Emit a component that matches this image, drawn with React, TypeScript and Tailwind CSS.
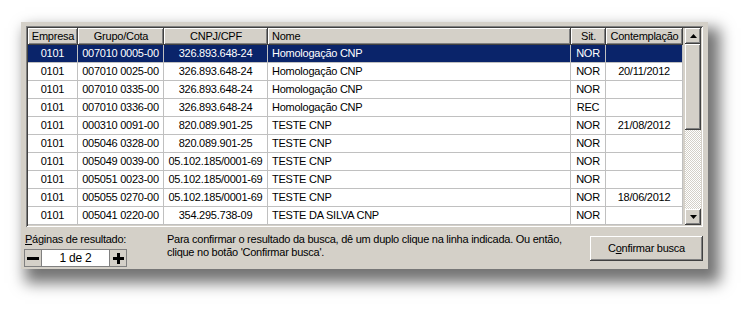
const rows = [
  ["0101", "007010 0005-00", "326.893.648-24", "Homologação CNP", "NOR", ""],
  ["0101", "007010 0025-00", "326.893.648-24", "Homologação CNP", "NOR", "20/11/2012"],
  ["0101", "007010 0335-00", "326.893.648-24", "Homologação CNP", "NOR", ""],
  ["0101", "007010 0336-00", "326.893.648-24", "Homologação CNP", "REC", ""],
  ["0101", "000310 0091-00", "820.089.901-25", "TESTE CNP", "NOR", "21/08/2012"],
  ["0101", "005046 0328-00", "820.089.901-25", "TESTE CNP", "NOR", ""],
  ["0101", "005049 0039-00", "05.102.185/0001-69", "TESTE CNP", "NOR", ""],
  ["0101", "005051 0023-00", "05.102.185/0001-69", "TESTE CNP", "NOR", ""],
  ["0101", "005055 0270-00", "05.102.185/0001-69", "TESTE CNP", "NOR", "18/06/2012"],
  ["0101", "005041 0220-00", "354.295.738-09", "TESTE DA SILVA CNP", "NOR", ""],
];

// column widths + alignment
const cols = [
  { title: "Empresa", w: "w-[50px]", align: "justify-center" },
  { title: "Grupo/Cota", w: "w-[86px]", align: "justify-center" },
  { title: "CNPJ/CPF", w: "w-[104px]", align: "justify-center" },
  { title: "Nome", w: "w-[303px]", align: "justify-start pl-[4px]" },
  { title: "Sit.", w: "w-[35px]", align: "justify-center" },
  { title: "Contemplação", w: "w-[77px]", align: "justify-center" },
];

const raised =
  "shadow-[inset_-1px_-1px_0_#404040,inset_1px_1px_0_#ffffff,inset_-2px_-2px_0_#808080]";

function Arrow({ down }: { down?: boolean }) {
  return (
    <svg width="7" height="4" viewBox="0 0 7 4">
      <path d={down ? "M0 0h7L3.5 4z" : "M3.5 0L7 4H0z"} fill="#000" />
    </svg>
  );
}

export default function App() {
  return (
    <div
      className="w-[751px] h-[312px] bg-white pl-[21px] pt-[22px] text-[11px] tracking-[-0.25px] text-black"
      style={{ fontFamily: '"Liberation Sans", Arial, sans-serif' }}
    >
      <div className="w-[687px] h-[247px] bg-[#d4d0c8] flex flex-col shadow-[8px_10px_14px_4px_rgba(0,0,0,0.55)]">
        {/* grid */}
        <div className="ml-[5px] mt-[4px] w-[677px] h-[201px] p-[2px] flex bg-[#d4d0c8] shadow-[inset_1px_1px_0_#808080,inset_-1px_-1px_0_#ffffff,inset_2px_2px_0_#404040,inset_-2px_-2px_0_#d4d0c8]">
          <div className="w-[657px] flex flex-col">
            <div className="flex h-[17px]">
              {cols.map((c) => (
                <div
                  key={c.title}
                  className={`${c.w} ${c.align} flex items-center h-[17px] ${
                    c.title === "Nome" ? "pl-[2px]" : ""
                  } ${raised}`}
                >
                  {c.title}
                </div>
              ))}
            </div>
            {rows.map((r, i) => (
              <div
                key={i}
                className={`flex h-[18px] ${i === 0 ? "bg-[#0a246a] text-white" : "bg-white"}`}
              >
                {r.map((v, j) => (
                  <div
                    key={j}
                    className={`${cols[j].w} ${cols[j].align} flex items-center border-r border-b border-[#c0c0c0] whitespace-nowrap overflow-hidden`}
                  >
                    {v}
                  </div>
                ))}
              </div>
            ))}
          </div>

          {/* scrollbar */}
          <div className="ml-[2px] w-[16px] flex flex-col">
            <div className={`h-[16px] bg-[#d4d0c8] flex items-center justify-center ${raised}`}>
              <Arrow />
            </div>
            <div className={`h-[86px] bg-[#d4d0c8] ${raised}`} />
            <div className="flex-1 bg-[image:repeating-conic-gradient(#d4d0c8_0_25%,#ffffff_0_50%)] bg-[length:2px_2px]" />
            <div className={`h-[16px] bg-[#d4d0c8] flex items-center justify-center ${raised}`}>
              <Arrow down />
            </div>
          </div>
        </div>

        {/* bottom area */}
        <div className="flex pt-[6px]">
          <div className="ml-[3px] w-[143px] flex flex-col">
            <div className="h-[13px] leading-[13px] pl-[1px]">
              <span className="underline">P</span>áginas de resultado:
            </div>
            <div className="mt-[3px] flex h-[18px] w-[103px] border border-[#808080]">
              <div className="w-[17px] bg-[#d4d0c8] border-r border-[#808080] flex items-center justify-center">
                <svg width="12" height="3" viewBox="0 0 12 3">
                  <rect width="12" height="3" fill="#000" />
                </svg>
              </div>
              <div className="flex-1 bg-white flex items-center justify-center text-[12px]">1 de 2</div>
              <div className="w-[17px] bg-[#d4d0c8] border-l border-[#808080] flex items-center justify-center">
                <svg width="11" height="11" viewBox="0 0 11 11">
                  <rect x="4" width="3" height="11" fill="#000" />
                  <rect y="4" width="11" height="3" fill="#000" />
                </svg>
              </div>
            </div>
          </div>
          <div className="flex-1 leading-[13px]">
            Para confirmar o resultado da busca, dê um duplo clique na linha indicada. Ou então,
            <br />
            clique no botão 'Confirmar busca'.
          </div>
          <div
            className={`mt-[3px] mr-[5px] w-[113px] h-[25px] flex items-center justify-center bg-[#d4d0c8] ${raised}`}
          >
            C<span className="underline">o</span>nfirmar busca
          </div>
        </div>
      </div>
    </div>
  );
}
